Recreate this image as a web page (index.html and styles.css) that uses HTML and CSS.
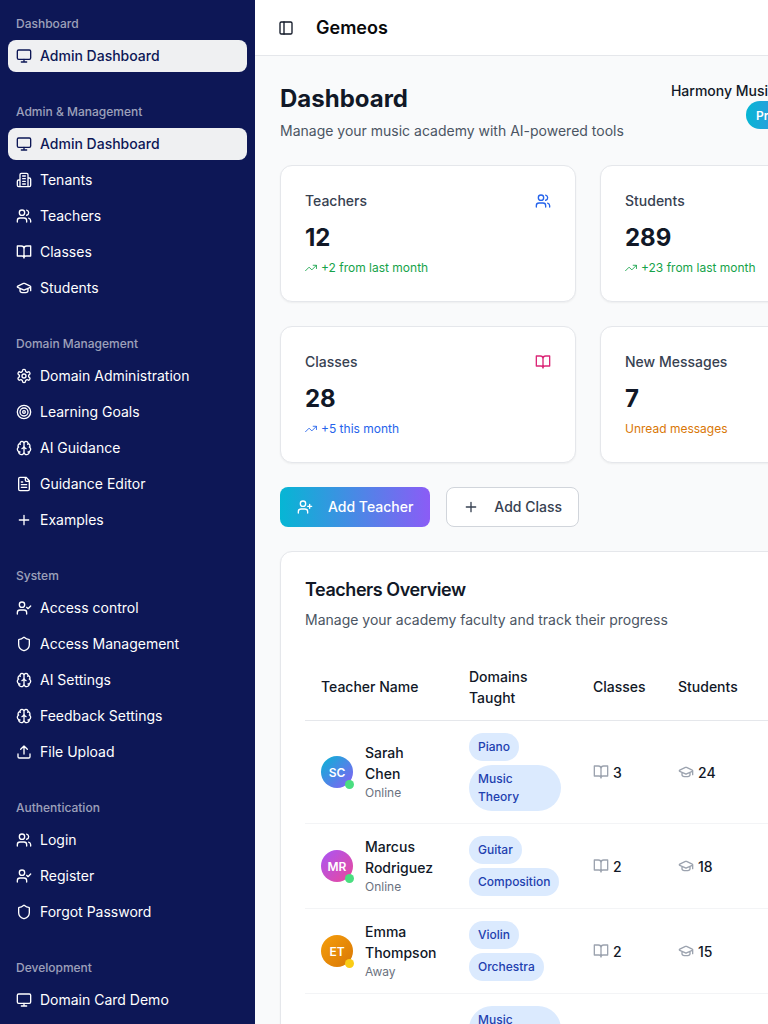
FILE: index.html
```html
<!DOCTYPE html>
<html lang="en">
<head>
<meta charset="utf-8">
<title>Gemeos Dashboard</title>
<link rel="stylesheet" href="styles.css">
</head>
<body>
<svg class="sprite" xmlns="http://www.w3.org/2000/svg">
  <symbol id="i-monitor" viewBox="0 0 24 24"><rect x="2" y="3" width="20" height="14" rx="2"/><path d="M8 21h8M12 17v4"/></symbol>
  <symbol id="i-building" viewBox="0 0 24 24"><path d="M6 22V4a2 2 0 0 1 2-2h8a2 2 0 0 1 2 2v18ZM6 12H4a2 2 0 0 0-2 2v6a2 2 0 0 0 2 2h2M18 9h2a2 2 0 0 1 2 2v9a2 2 0 0 1-2 2h-2M10 6h4M10 10h4M10 14h4M10 18h4"/></symbol>
  <symbol id="i-users" viewBox="0 0 24 24"><path d="M16 21v-2a4 4 0 0 0-4-4H6a4 4 0 0 0-4 4v2"/><circle cx="9" cy="7" r="4"/><path d="M22 21v-2a4 4 0 0 0-3-3.870M16 3.130a4 4 0 0 1 0 7.750"/></symbol>
  <symbol id="i-book" viewBox="0 0 24 24"><path d="M2 3h6a4 4 0 0 1 4 4v14a3 3 0 0 0-3-3H2zM22 3h-6a4 4 0 0 0-4 4v14a3 3 0 0 1 3-3h7z"/></symbol>
  <symbol id="i-cap" viewBox="0 0 24 24"><path d="M21.42 10.922a1 1 0 0 0-.019-1.838L12.83 5.18a2 2 0 0 0-1.66 0L2.6 9.08a1 1 0 0 0 0 1.832l8.57 3.908a2 2 0 0 0 1.66 0zM22 10v6M6 12.5V16a6 3 0 0 0 12 0v-3.5"/></symbol>
  <symbol id="i-settings" viewBox="0 0 24 24"><path d="M12.22 2h-.44a2 2 0 0 0-2 2v.18a2 2 0 0 1-1 1.73l-.43.25a2 2 0 0 1-2 0l-.15-.08a2 2 0 0 0-2.73.73l-.22.38a2 2 0 0 0 .73 2.73l.15.1a2 2 0 0 1 1 1.72v.51a2 2 0 0 1-1 1.74l-.15.09a2 2 0 0 0-.73 2.73l.22.38a2 2 0 0 0 2.73.73l.15-.08a2 2 0 0 1 2 0l.43.25a2 2 0 0 1 1 1.73V20a2 2 0 0 0 2 2h.44a2 2 0 0 0 2-2v-.18a2 2 0 0 1 1-1.73l.43-.25a2 2 0 0 1 2 0l.15.08a2 2 0 0 0 2.73-.73l.22-.39a2 2 0 0 0-.73-2.73l-.15-.08a2 2 0 0 1-1-1.74v-.5a2 2 0 0 1 1-1.74l.15-.09a2 2 0 0 0 .73-2.73l-.22-.38a2 2 0 0 0-2.73-.73l-.15.08a2 2 0 0 1-2 0l-.43-.25a2 2 0 0 1-1-1.73V4a2 2 0 0 0-2-2z"/><circle cx="12" cy="12" r="3"/></symbol>
  <symbol id="i-target" viewBox="0 0 24 24"><circle cx="12" cy="12" r="10"/><circle cx="12" cy="12" r="6"/><circle cx="12" cy="12" r="2"/></symbol>
  <symbol id="i-brain" viewBox="0 0 24 24"><path d="M12 5a3 3 0 1 0-5.997.125 4 4 0 0 0-2.526 5.77 4 4 0 0 0 .556 6.588A4 4 0 1 0 12 18ZM12 5a3 3 0 1 1 5.997.125 4 4 0 0 1 2.526 5.77 4 4 0 0 1-.556 6.588A4 4 0 1 1 12 18ZM15 13a4.5 4.5 0 0 1-3-4 4.5 4.5 0 0 1-3 4M17.599 6.5a3 3 0 0 0 .399-1.375M6.003 5.125A3 3 0 0 0 6.401 6.5M3.477 10.896a4 4 0 0 1 .585-.396M19.938 10.5a4 4 0 0 1 .585.396M6 18a4 4 0 0 1-1.967-.516M19.967 17.484A4 4 0 0 1 18 18"/></symbol>
  <symbol id="i-file" viewBox="0 0 24 24"><path d="M15 2H6a2 2 0 0 0-2 2v16a2 2 0 0 0 2 2h12a2 2 0 0 0 2-2V7ZM14 2v4a2 2 0 0 0 2 2h4M10 9H8M16 13H8M16 17H8"/></symbol>
  <symbol id="i-plus" viewBox="0 0 24 24"><path d="M5 12h14M12 5v14"/></symbol>
  <symbol id="i-user-check" viewBox="0 0 24 24"><path d="M16 21v-2a4 4 0 0 0-4-4H6a4 4 0 0 0-4 4v2"/><circle cx="9" cy="7" r="4"/><path d="m16 11 2 2 4-4"/></symbol>
  <symbol id="i-user-plus" viewBox="0 0 24 24"><path d="M16 21v-2a4 4 0 0 0-4-4H6a4 4 0 0 0-4 4v2"/><circle cx="9" cy="7" r="4"/><path d="M19 8v6M22 11h-6"/></symbol>
  <symbol id="i-shield" viewBox="0 0 24 24"><path d="M20 13c0 5-3.5 7.5-7.66 8.95a1 1 0 0 1-.67-.01C7.5 20.5 4 18 4 13V6a1 1 0 0 1 1-1c2 0 4.5-1.2 6.24-2.72a1.17 1.17 0 0 1 1.52 0C14.51 3.81 17 5 19 5a1 1 0 0 1 1 1z"/></symbol>
  <symbol id="i-upload" viewBox="0 0 24 24"><path d="M21 15v4a2 2 0 0 1-2 2H5a2 2 0 0 1-2-2v-4M17 8l-5-5-5 5M12 3v12"/></symbol>
  <symbol id="i-trend" viewBox="1 1 22 22"><path d="m22 7-8.500 8.500-5-5L2 17M16 7h6v6"/></symbol>
  <symbol id="i-panel" viewBox="0 0 24 24"><rect x="3" y="3" width="18" height="18" rx="2"/><path d="M9 3v18"/></symbol>
</svg>

<div class="app">
  <aside class="sidebar">
    <section class="nav-group">
      <h2 class="nav-label">Dashboard</h2>
      <a class="nav-item active"><svg class="icon"><use href="#i-monitor"/></svg>Admin Dashboard</a>
    </section>
    <section class="nav-group">
      <h2 class="nav-label">Admin &amp; Management</h2>
      <a class="nav-item active"><svg class="icon"><use href="#i-monitor"/></svg>Admin Dashboard</a>
      <a class="nav-item"><svg class="icon"><use href="#i-building"/></svg>Tenants</a>
      <a class="nav-item"><svg class="icon"><use href="#i-users"/></svg>Teachers</a>
      <a class="nav-item"><svg class="icon"><use href="#i-book"/></svg>Classes</a>
      <a class="nav-item"><svg class="icon"><use href="#i-cap"/></svg>Students</a>
    </section>
    <section class="nav-group">
      <h2 class="nav-label">Domain Management</h2>
      <a class="nav-item"><svg class="icon"><use href="#i-settings"/></svg>Domain Administration</a>
      <a class="nav-item"><svg class="icon"><use href="#i-target"/></svg>Learning Goals</a>
      <a class="nav-item"><svg class="icon"><use href="#i-brain"/></svg>AI Guidance</a>
      <a class="nav-item"><svg class="icon"><use href="#i-file"/></svg>Guidance Editor</a>
      <a class="nav-item"><svg class="icon"><use href="#i-plus"/></svg>Examples</a>
    </section>
    <section class="nav-group">
      <h2 class="nav-label">System</h2>
      <a class="nav-item"><svg class="icon"><use href="#i-user-check"/></svg>Access control</a>
      <a class="nav-item"><svg class="icon"><use href="#i-shield"/></svg>Access Management</a>
      <a class="nav-item"><svg class="icon"><use href="#i-brain"/></svg>AI Settings</a>
      <a class="nav-item"><svg class="icon"><use href="#i-brain"/></svg>Feedback Settings</a>
      <a class="nav-item"><svg class="icon"><use href="#i-upload"/></svg>File Upload</a>
    </section>
    <section class="nav-group">
      <h2 class="nav-label">Authentication</h2>
      <a class="nav-item"><svg class="icon"><use href="#i-users"/></svg>Login</a>
      <a class="nav-item"><svg class="icon"><use href="#i-user-check"/></svg>Register</a>
      <a class="nav-item"><svg class="icon"><use href="#i-shield"/></svg>Forgot Password</a>
    </section>
    <section class="nav-group">
      <h2 class="nav-label">Development</h2>
      <a class="nav-item"><svg class="icon"><use href="#i-monitor"/></svg>Domain Card Demo</a>
    </section>
  </aside>

  <div class="main">
    <header class="topbar">
      <svg class="icon topbar-toggle"><use href="#i-panel"/></svg>
      <span class="brand">Gemeos</span>
    </header>

    <main class="content">
      <div class="page-head">
        <div>
          <h1 class="page-title">Dashboard</h1>
          <p class="page-sub">Manage your music academy with AI-powered tools</p>
        </div>
        <div class="org">
          <span class="org-name">Harmony Music Academy</span>
          <span class="org-plan">Professional</span>
        </div>
      </div>

      <div class="stats">
        <article class="stat">
          <div class="stat-top"><span class="stat-label">Teachers</span><svg class="icon blue"><use href="#i-users"/></svg></div>
          <div class="stat-value">12</div>
          <div class="stat-note green"><svg class="icon-sm"><use href="#i-trend"/></svg>+2 from last month</div>
        </article>
        <article class="stat">
          <div class="stat-top"><span class="stat-label">Students</span><svg class="icon violet"><use href="#i-cap"/></svg></div>
          <div class="stat-value">289</div>
          <div class="stat-note green"><svg class="icon-sm"><use href="#i-trend"/></svg>+23 from last month</div>
        </article>
        <article class="stat">
          <div class="stat-top"><span class="stat-label">Classes</span><svg class="icon pink"><use href="#i-book"/></svg></div>
          <div class="stat-value">28</div>
          <div class="stat-note blue"><svg class="icon-sm"><use href="#i-trend"/></svg>+5 this month</div>
        </article>
        <article class="stat">
          <div class="stat-top"><span class="stat-label">New Messages</span></div>
          <div class="stat-value">7</div>
          <div class="stat-note orange">Unread messages</div>
        </article>
      </div>

      <div class="actions">
        <button class="btn btn-primary"><svg class="icon"><use href="#i-user-plus"/></svg>Add Teacher</button>
        <button class="btn btn-outline"><svg class="icon"><use href="#i-plus"/></svg>Add Class</button>
      </div>

      <section class="panel">
        <h2 class="panel-title">Teachers Overview</h2>
        <p class="panel-sub">Manage your academy faculty and track their progress</p>
        <table class="table">
          <colgroup>
            <col class="col-name"><col class="col-domains"><col class="col-classes"><col class="col-students">
          </colgroup>
          <thead>
            <tr><th>Teacher Name</th><th class="th-wrap">Domains Taught</th><th>Classes</th><th>Students</th></tr>
          </thead>
          <tbody>
            <tr>
              <td><div class="person"><span class="avatar av-cyan">SC<i class="dot online"></i></span><div><div class="person-name">Sarah Chen</div><div class="person-status">Online</div></div></div></td>
              <td><div class="pills"><span class="pill">Piano</span><span class="pill">Music Theory</span></div></td>
              <td><span class="count"><svg class="icon muted"><use href="#i-book"/></svg>3</span></td>
              <td><span class="count"><svg class="icon muted"><use href="#i-cap"/></svg>24</span></td>
            </tr>
            <tr>
              <td><div class="person"><span class="avatar av-pink">MR<i class="dot online"></i></span><div><div class="person-name">Marcus Rodriguez</div><div class="person-status">Online</div></div></div></td>
              <td><div class="pills"><span class="pill">Guitar</span><span class="pill">Composition</span></div></td>
              <td><span class="count"><svg class="icon muted"><use href="#i-book"/></svg>2</span></td>
              <td><span class="count"><svg class="icon muted"><use href="#i-cap"/></svg>18</span></td>
            </tr>
            <tr>
              <td><div class="person"><span class="avatar av-amber">ET<i class="dot away"></i></span><div><div class="person-name">Emma Thompson</div><div class="person-status">Away</div></div></div></td>
              <td><div class="pills"><span class="pill">Violin</span><span class="pill">Orchestra</span></div></td>
              <td><span class="count"><svg class="icon muted"><use href="#i-book"/></svg>2</span></td>
              <td><span class="count"><svg class="icon muted"><use href="#i-cap"/></svg>15</span></td>
            </tr>
            <tr>
              <td></td>
              <td><div class="pills"><span class="pill">Music Theory</span></div></td>
              <td></td>
              <td></td>
            </tr>
          </tbody>
        </table>
      </section>
    </main>
  </div>
</div>
</body>
</html>
```
FILE: styles.css
```css
* { box-sizing: border-box; }

html, body {
  margin: 0;
  height: 1024px;
  overflow: hidden;
}

body {
  font-family: Inter, "Liberation Sans", sans-serif;
  font-size: 14px;
  line-height: 21px;
  color: #111827;
  background: #f9fafb;
}

.sprite { display: none; }

.icon, .icon-sm {
  fill: none;
  stroke: currentColor;
  stroke-linecap: round;
  stroke-linejoin: round;
  flex: none;
}
.icon { width: 16px; height: 16px; stroke-width: 2; }
.icon-sm { width: 12px; height: 12px; stroke-width: 1.6; }

.app { display: flex; height: 1024px; }

/* Sidebar */
.sidebar {
  width: 255px;
  flex: none;
  padding: 8px 8px 0;
  display: flex;
  flex-direction: column;
  gap: 24px;
  background: #0d1756;
  color: #fff;
  overflow: hidden;
}
.nav-group { display: flex; flex-direction: column; gap: 4px; }
.nav-label {
  margin: 0 0 -4px;
  height: 32px;
  padding: 0 8px;
  display: flex;
  align-items: center;
  font-size: 12px;
  line-height: 16px;
  font-weight: 500;
  color: rgba(255, 255, 255, 0.6);
}
.nav-item {
  height: 32px;
  padding: 0 8px;
  display: flex;
  align-items: center;
  gap: 8px;
  border-radius: 8px;
  line-height: 20px;
  font-weight: 400;
  color: #fff;
}
.nav-item.active { background: #eff0f2; color: #0d1756; font-weight: 500; }

/* Main column */
.main { flex: 1; min-width: 0; background: #f9fafb; }
.topbar {
  height: 56px;
  padding: 0 23px;
  display: flex;
  align-items: center;
  gap: 22px;
  background: #fff;
  border-bottom: 1px solid #e5e7eb;
}
.topbar-toggle { color: #111827; }
.brand { font-size: 18px; line-height: 28px; font-weight: 600; color: #09090b; }

.content { width: 666px; padding: 24px 24px 24px 25px; }

.page-head { display: flex; justify-content: space-between; align-items: flex-start; padding-right: 54px; }
.page-title { margin: 1px 0 3px; font-size: 24px; line-height: 36px; font-weight: 700; color: #111827; }
.page-sub { margin: 0; color: #4b5563; }
.org { display: flex; flex-direction: column; align-items: flex-end; }
.org-name { font-weight: 500; color: #111827; }
.org-plan {
  height: 28px;
  padding: 0 15px 0 10px;
  display: flex;
  align-items: center;
  border-radius: 14px;
  background: linear-gradient(90deg, #06b6d4, #8b5cf6);
  color: #fff;
  font-size: 12px;
  font-weight: 600;
}

/* Stats */
.stats {
  margin-top: 24px;
  display: grid;
  grid-template-columns: 296px 296px;
  gap: 24px;
}
.stat {
  height: 137px;
  padding: 24px;
  background: #fff;
  border: 1px solid #e5e7eb;
  border-radius: 12px;
  box-shadow: 0 1px 2px rgba(0, 0, 0, 0.05);
}
.stat-top { display: flex; justify-content: space-between; align-items: center; }
.stat-label { font-weight: 500; color: #374151; }
.stat-value { margin-top: 11px; font-size: 24px; line-height: 32px; font-weight: 700; color: #111827; }
.stat-note {
  margin-top: 5px;
  display: flex;
  align-items: center;
  gap: 4px;
  font-size: 12px;
  line-height: 18px;
}
.blue { color: #2563eb; }
.green { color: #16a34a; }
.pink { color: #db2777; }
.violet { color: #7c3aed; }
.orange { color: #d97706; }
.muted { color: #9ca3af; }

/* Buttons */
.actions { margin-top: 24px; display: flex; gap: 16px; }
.btn {
  height: 40px;
  padding: 0 16px;
  display: flex;
  align-items: center;
  gap: 15px;
  border-radius: 8px;
  font: 500 14px/20px Inter, "Liberation Sans", sans-serif;
}
.btn-primary {
  border: 1px solid transparent;
  color: #fff;
  background: linear-gradient(90deg, #06b6d4, #8b5cf6) border-box;
}
.btn-outline { background: #fff; border: 1px solid #d1d5db; color: #374151; }

/* Table panel */
.panel {
  margin-top: 24px;
  padding: 24px;
  background: #fff;
  border: 1px solid #e5e7eb;
  border-radius: 12px;
  box-shadow: 0 1px 2px rgba(0, 0, 0, 0.05);
}
.panel-title { margin: 0; font-size: 18px; line-height: 28px; font-weight: 600; letter-spacing: -0.025em; color: #111827; }
.panel-sub { margin: 5px 0 24px; color: #4b5563; }

.table { width: 568px; table-layout: fixed; border-collapse: collapse; }
.col-name { width: 148px; }
.col-domains { width: 124px; }
.col-classes { width: 85px; }
.table th {
  padding: 11px 16px 13px;
  text-align: left;
  vertical-align: middle;
  font-weight: 500;
  color: #111827;
  border-bottom: 1px solid #e5e7eb;
}
.table .th-wrap { padding: 12px 16px; }
.table td {
  padding: 12px 16px;
  vertical-align: middle;
  border-bottom: 1px solid #f3f4f6;
}

.person { display: flex; align-items: center; gap: 12px; }
.avatar {
  position: relative;
  width: 32px;
  height: 32px;
  flex: none;
  display: flex;
  align-items: center;
  justify-content: center;
  border-radius: 50%;
  color: #fff;
  font-size: 12px;
  font-weight: 600;
}
.av-cyan { background: linear-gradient(135deg, #06b6d4, #8b5cf6); }
.av-pink { background: linear-gradient(135deg, #a855f7, #ec4899); }
.av-amber { background: linear-gradient(135deg, #f59e0b, #d97706); }
.dot {
  position: absolute;
  right: -1px;
  bottom: -1px;
  width: 9px;
  height: 9px;
  border-radius: 50%;
}
.online { background: #4ade80; }
.away { background: #facc15; }
.person-name { font-weight: 500; color: #111827; }
.person-status { font-size: 12px; line-height: 18px; color: #6b7280; }

.pills { display: flex; flex-wrap: wrap; gap: 4px; }
.pill {
  padding: 5px 9px;
  border-radius: 23px;
  background: #dbeafe;
  color: #1e40af;
  font-size: 12px;
  line-height: 18px;
  font-weight: 500;
}

.count { display: flex; align-items: center; gap: 4px; font-weight: 500; color: #111827; }
```
